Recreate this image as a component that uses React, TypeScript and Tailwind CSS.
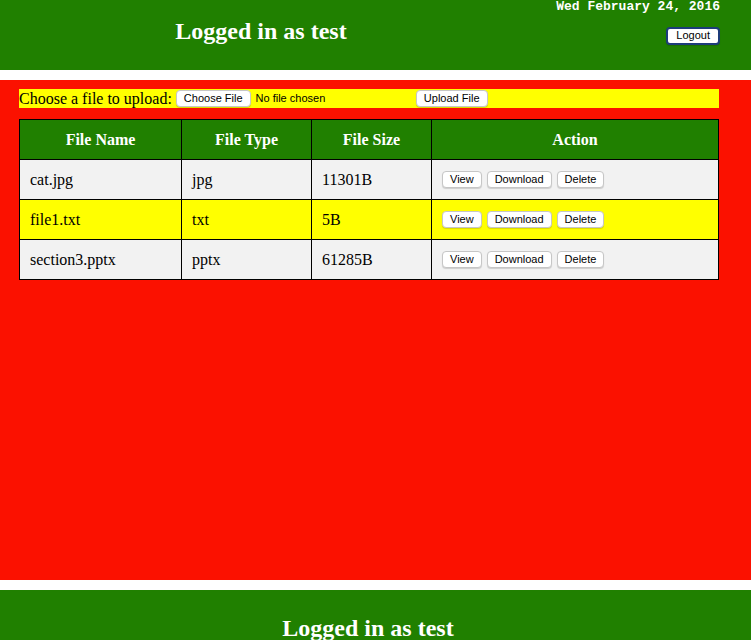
const files = [
  { name: 'cat.jpg', type: 'jpg', size: '11301B', bg: 'bg-[#f2f2f2]' },
  { name: 'file1.txt', type: 'txt', size: '5B', bg: 'bg-[#ffff00]' },
  { name: 'section3.pptx', type: 'pptx', size: '61285B', bg: 'bg-[#f2f2f2]' },
];

function SmallButton({ label, focused = false }: { label: string; focused?: boolean }) {
  return (
    <button
      className={
        'h-[17px] bg-white rounded-[4px] text-[11px] leading-none text-black font-["Liberation_Sans",Arial,sans-serif] shadow-[0_1px_1px_rgba(0,0,0,0.15)] ' +
        (focused ? 'border-2 border-[#1d3c7a] h-[18px] px-[8px]' : 'border border-[#c6c6c6] px-[7px]')
      }
    >
      {label}
    </button>
  );
}

export default function App() {
  return (
    <div className='min-h-screen bg-white font-["Liberation_Serif","Times_New_Roman",serif]'>
      <header className="h-[70px] bg-[#208000] flex">
        <div className="w-[522px] pt-[17px] text-center">
          <h1 className="text-[24px] leading-[28px] font-bold text-white">Logged in as test</h1>
        </div>
        <div className="flex-1 flex flex-col items-end pr-[31px]">
          <div className='pt-[1px] text-[13px] leading-[12px] font-bold text-white font-["Liberation_Mono","Courier_New",monospace]'>
            Wed February 24, 2016
          </div>
          <div className="mt-[9px]">
            <SmallButton label="Logout" focused />
          </div>
        </div>
      </header>

      <main className="mt-[10px] h-[500px] bg-[#fb1100] pt-[9px] px-[19px]">
        <div className="w-[700px] h-[19px] bg-[#ffff00] flex items-center text-[16px] text-black">
          <span className="leading-[19px]">Choose a file to upload:</span>
          <div className="ml-[4px] w-[240px] flex items-center">
            <SmallButton label="Choose File" />
            <span className='ml-[5px] text-[11px] font-["Liberation_Sans",Arial,sans-serif]'>No file chosen</span>
          </div>
          <SmallButton label="Upload File" />
        </div>

        <table className="mt-[11px] w-[700px] border-collapse border border-black text-[16px] text-black">
          <thead>
            <tr className="h-[40px] bg-[#208000] text-white">
              <th className="w-[162px] border border-black font-bold">File Name</th>
              <th className="w-[130px] border border-black font-bold">File Type</th>
              <th className="w-[120px] border border-black font-bold">File Size</th>
              <th className="border border-black font-bold">Action</th>
            </tr>
          </thead>
          <tbody>
            {files.map((f) => (
              <tr key={f.name} className={'h-[40px] ' + f.bg}>
                <td className="border border-black pl-[10px]">{f.name}</td>
                <td className="border border-black pl-[10px]">{f.type}</td>
                <td className="border border-black pl-[10px]">{f.size}</td>
                <td className="border border-black pl-[10px]">
                  <div className="flex gap-[5px]">
                    <SmallButton label="View" />
                    <SmallButton label="Download" />
                    <SmallButton label="Delete" />
                  </div>
                </td>
              </tr>
            ))}
          </tbody>
        </table>
      </main>

      <footer className="mt-[10px] h-[70px] bg-[#208000] pt-[24px] pr-[15px] text-center">
        <h2 className="text-[24px] leading-[28px] font-bold text-white">Logged in as test</h2>
      </footer>
    </div>
  );
}
